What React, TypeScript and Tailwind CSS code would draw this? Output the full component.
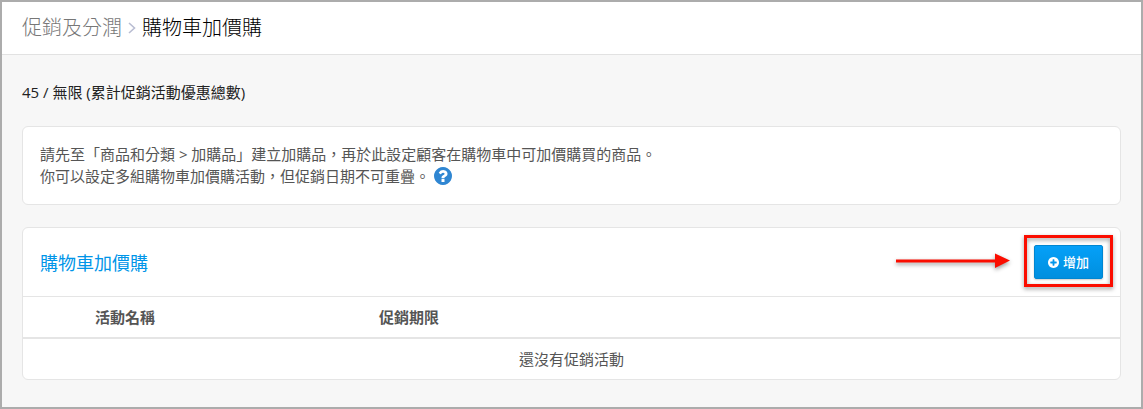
import React from "react";

const DISC =
  "m320-64q0 209-103 385.5t-279.5 279.5-385.5 103-385.5-103-279.5-279.5-103-385.5 103-385.5 279.5-279.5 385.5-103 385.5 103 279.5 279.5 103 385.5z";

function PlusCircle() {
  return (
    <svg viewBox="0 0 1536 1536" className="h-[11px] w-[11px] fill-current" aria-hidden="true">
      <path
        d={
          "M1216 832v-128q0-26-19-45t-45-19h-256v-256q0-26-19-45t-45-19h-128q-26 0-45 19t-19 45v256h-256q-26 0-45 19t-19 45v128q0 26 19 45t45 19h256v256q0 26 19 45t45 19h128q26 0 45-19t19-45v-256h256q26 0 45-19t19-45z" +
          DISC
        }
      />
    </svg>
  );
}

function QuestionCircle() {
  return (
    <svg viewBox="0 0 1536 1536" className="h-[18px] w-[18px] fill-[#2f86d2]" aria-hidden="true">
      <path d="M896 1248v-192q0-14-9-23t-23-9h-192q-14 0-23 9t-9 23v192q0 14 9 23t23 9h192q14 0 23-9t9-23zm256-672q0-88-55.5-163t-138.5-116-170-41q-243 0-371 213-15 24 8 42l132 100q7 6 19 6 16 0 25-12 53-68 86-92 34-24 86-24 48 0 85.5 26t37.5 59q0 38-20 61t-68 45q-63 28-115.5 86.5t-52.5 125.5v36q0 14 9 23t23 9h192q14 0 23-9t9-23q0-19 21.5-49.5t54.5-49.5q32-18 49-28.5t46-35 44.5-48 28-60.5 12.5-81zm384 192q0 209-103 385.5t-279.5 279.5-385.5 103-385.5-103-279.5-279.5-103-385.5 103-385.5 279.5-279.5 385.5-103 385.5 103 279.5 279.5 103 385.5z" />
    </svg>
  );
}

function Callout() {
  return (
    <>
      <svg
        viewBox="0 0 114 20"
        className="pointer-events-none absolute right-full top-1.5 mr-6 h-5 w-[114px] max-w-none overflow-visible drop-shadow-[0_2px_2px_rgba(0,0,0,0.4)]"
        aria-hidden="true"
      >
        <path d="M0 8.5H99V2.5L114 9.5L99 17V11.5H0z" fill="#fb0d00" />
      </svg>
      <div className="pointer-events-none absolute -bottom-2 -left-2.5 -right-2.5 -top-2.5 border-3 border-[#fb0d00] drop-shadow-[0_2px_2px_rgba(0,0,0,0.4)]" />
    </>
  );
}

export default function App() {
  return (
    <div className="min-h-screen border-2 border-[#acacac] bg-[#f7f7f7] font-['Open_Sans','Noto_Sans_CJK_TC',sans-serif] text-[15px] leading-[22px] text-[#555]">
      <header className="border-b border-[#e2e2e2] bg-white px-5 py-3">
        <nav aria-label="Breadcrumb" className="flex items-center gap-1.5 text-xl leading-7 font-light">
          <a href="#promotions" className="text-[#777]">促銷及分潤</a>
          <svg viewBox="0 0 8 12" className="h-3 w-2" aria-hidden="true">
            <path d="M1 1l5.5 5L1 11" fill="none" stroke="#b9bdd2" strokeWidth="1.6" />
          </svg>
          <h1 className="text-black">購物車加價購</h1>
        </nav>
      </header>

      <main className="px-5 pt-[26px] pb-6">
        <p className="text-[#222]">45 / 無限 (累計促銷活動優惠總數)</p>

        <section className="mt-[23px] rounded-md border border-[#e5e5e5] bg-white px-[17px] pt-4 pb-[17px]">
          <p>請先至「商品和分類 &gt; 加購品」建立加購品，再於此設定顧客在購物車中可加價購買的商品。</p>
          <div className="flex items-center gap-1">
            <p>你可以設定多組購物車加價購活動，但促銷日期不可重疊。</p>
            <a href="#help" aria-label="說明">
              <QuestionCircle />
            </a>
          </div>
        </section>

        <section className="mt-[22px] rounded-md border border-[#e5e5e5] bg-white">
          <div className="flex items-center justify-between px-[17px] py-[17px]">
            <h2 className="pt-0.5 text-lg text-[#0095e8]">購物車加價購</h2>
            <div className="relative">
              <button
                type="button"
                className="flex h-[34px] items-center gap-1 rounded-xs border border-[#0086d1] bg-linear-to-b from-[#05a0f8] to-[#008fdf] px-[13px] text-[13px] font-medium text-white shadow-[0_1px_2px_rgba(0,0,0,0.2)]"
              >
                <PlusCircle />
                增加
              </button>
              <Callout />
            </div>
          </div>
          <table className="w-full table-fixed border-t border-[#e5e5e5]">
            <colgroup>
              <col className="w-16" />
              <col className="w-[284px]" />
              <col />
            </colgroup>
            <thead>
              <tr className="border-b-2 border-[#e5e5e5] text-left">
                <td />
                <th scope="col" className="px-2 py-[9px] font-bold">活動名稱</th>
                <th scope="col" className="px-2 py-[9px] font-bold">促銷期限</th>
              </tr>
            </thead>
            <tbody>
              <tr>
                <td colSpan={3} className="px-2 py-[9px] text-center">還沒有促銷活動</td>
              </tr>
            </tbody>
          </table>
        </section>
      </main>
    </div>
  );
}
